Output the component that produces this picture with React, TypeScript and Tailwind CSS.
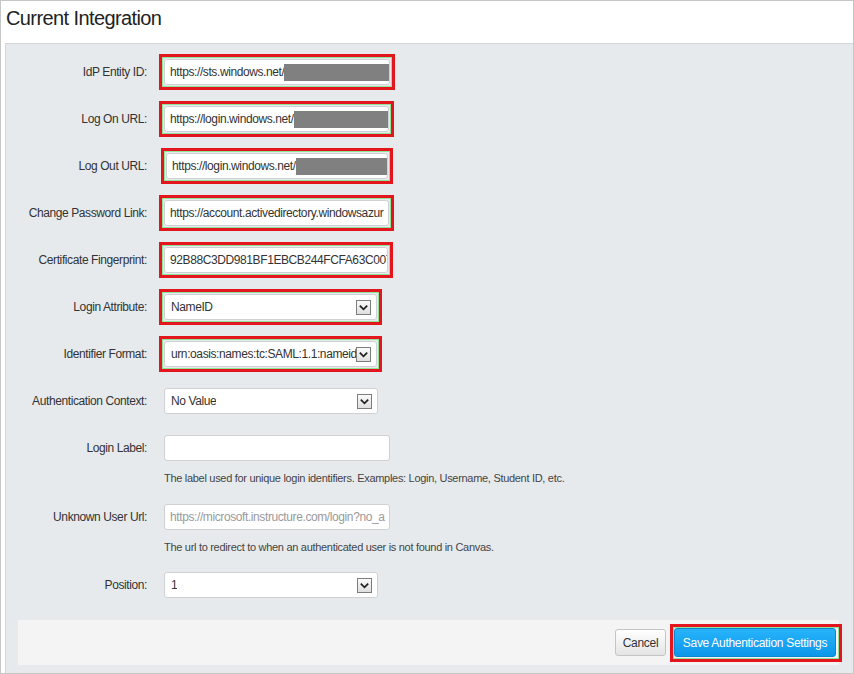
import React from 'react';

const font = "font-['Liberation_Sans',Arial,sans-serif]";

const Hl = ({ on, children, className = '' }: { on?: boolean; children: React.ReactNode; className?: string }) => (
  <div
    className={
      (on
        ? 'border-[3px] border-[#e3161d] shadow-[inset_0_0_0_1px_#8fe39b] '
        : 'border-[3px] border-transparent ') +
      'p-[2px] ' +
      className
    }
  >
    {children}
  </div>
);

const Arrow = () => (
  <svg width="15" height="15" viewBox="0 0 15 15" className="shrink-0">
    <defs>
      <linearGradient id="ag" x1="0" y1="0" x2="0" y2="1">
        <stop offset="0" stopColor="#fbfbfb" />
        <stop offset="1" stopColor="#dedede" />
      </linearGradient>
    </defs>
    <rect x="0.5" y="0.5" width="14" height="14" fill="url(#ag)" stroke="#7d7d7d" />
    <polyline points="3.8,5.6 7.5,9.4 11.2,5.6" fill="none" stroke="#1f1f1f" strokeWidth="1.7" />
  </svg>
);

const TextBox = ({
  w,
  text,
  redact,
  placeholder,
}: {
  w: string;
  text?: string;
  redact?: string;
  placeholder?: boolean;
}) => (
  <div
    className={
      'flex h-[26px] items-center overflow-hidden whitespace-nowrap rounded-[3px] border border-[#cfd2d5] bg-white pl-[5px] text-[12px] tracking-[-0.4px] ' +
      (placeholder ? 'text-[#9a9a9a] ' : 'text-[#333] ') +
      w
    }
  >
    <span>{text}</span>
    {redact && <span className={'inline-block h-[17px] shrink-0 bg-[#808080] ' + redact} />}
  </div>
);

const SelectBox = ({ w, text }: { w: string; text: string }) => (
  <div
    className={
      'flex h-[26px] items-center justify-between overflow-hidden whitespace-nowrap rounded-[3px] border border-[#cfd2d5] bg-white pl-[6px] pr-[5px] text-[12px] tracking-[-0.4px] text-[#333] ' +
      w
    }
  >
    <span className="overflow-hidden">{text}</span>
    <Arrow />
  </div>
);

const Row = ({ label, children, className = '' }: { label: string; children: React.ReactNode; className?: string }) => (
  <div className={'flex h-[36px] items-center ' + className}>
    <div className="w-[141px] shrink-0 text-right text-[12px] tracking-[-0.4px] text-[#333]">{label}</div>
    <div className="ml-[12px]">{children}</div>
  </div>
);

const Help = ({ children, className = '' }: { children: React.ReactNode; className?: string }) => (
  <div className={'ml-[158px] h-[16px] whitespace-nowrap text-[11px] leading-[16px] tracking-[-0.3px] text-[#444] ' + className}>
    {children}
  </div>
);

export default function App() {
  return (
    <div className={'flex h-[674px] w-[854px] flex-col border border-[#c6c6c6] bg-white ' + font}>
      <div className="h-[42px] shrink-0 pl-[5px] pt-[6px] text-[20px] leading-[22px] tracking-[-0.6px] text-[#222]">
        Current Integration
      </div>
      <div className="ml-[4px] flex flex-1 flex-col border-l border-t border-[#d2d6da] bg-[#e7eaed] pt-[10px]">
        <div className="flex flex-col gap-[11px]">
          <Row label="IdP Entity ID:">
            <Hl on>
              <TextBox w="w-[226px]" text="https://sts.windows.net/" redact="w-[105px]" />
            </Hl>
          </Row>
          <Row label="Log On URL:">
            <Hl on>
              <TextBox w="w-[225px]" text="https://login.windows.net/" redact="w-[95px]" />
            </Hl>
          </Row>
          <Row label="Log Out URL:">
            <Hl on className="ml-[2px]">
              <TextBox w="w-[222px]" text="https://login.windows.net/" redact="w-[91px]" />
            </Hl>
          </Row>
          <Row label="Change Password Link:">
            <Hl on>
              <TextBox w="w-[225px]" text="https://account.activedirectory.windowsazur" />
            </Hl>
          </Row>
          <Row label="Certificate Fingerprint:">
            <Hl on>
              <TextBox w="w-[224px]" text="92B88C3DD981BF1EBCB244FCFA63C007" />
            </Hl>
          </Row>
          <Row label="Login Attribute:">
            <Hl on>
              <SelectBox w="w-[213px]" text="NameID" />
            </Hl>
          </Row>
          <Row label="Identifier Format:">
            <Hl on>
              <SelectBox w="w-[213px]" text="urn:oasis:names:tc:SAML:1.1:nameid" />
            </Hl>
          </Row>
          <Row label="Authentication Context:">
            <Hl>
              <SelectBox w="w-[214px]" text="No Value" />
            </Hl>
          </Row>
          <Row label="Login Label:">
            <Hl>
              <TextBox w="w-[226px]" />
            </Hl>
          </Row>
        </div>
        <Help className="mt-[4px]">
          The label used for unique login identifiers. Examples: Login, Username, Student ID, etc.
        </Help>
        <Row label="Unknown User Url:" className="mt-[13px]">
          <Hl>
            <TextBox w="w-[226px]" text="https://microsoft.instructure.com/login?no_a" placeholder />
          </Hl>
        </Row>
        <Help className="mt-[4px]">The url to redirect to when an authenticated user is not found in Canvas.</Help>
        <Row label="Position:" className="mt-[12px]">
          <Hl>
            <SelectBox w="w-[214px]" text="1" />
          </Hl>
        </Row>
        <div className="ml-[12px] mr-[14px] mt-[17px] flex h-[45px] items-center justify-end gap-[4px] bg-[#f4f4f4]">
          <button className="h-[27px] w-[51px] rounded-[3px] border border-[#c4c4c4] bg-gradient-to-b from-white to-[#e4e4e4] text-[12px] tracking-[-0.3px] text-[#333]">
            Cancel
          </button>
          <div className="-mr-[3px] border-[3px] border-[#e3161d] py-[1.5px] pl-[1px] pr-[3px] shadow-[inset_0_0_0_1px_#8fe39b]">
            <button className="h-[29px] w-[162px] rounded-[3px] border border-[#0b86d0] bg-gradient-to-b from-[#27b3fb] to-[#0b97ea] text-[12px] tracking-[-0.3px] text-white">
              Save Authentication Settings
            </button>
          </div>
        </div>
      </div>
    </div>
  );
}
